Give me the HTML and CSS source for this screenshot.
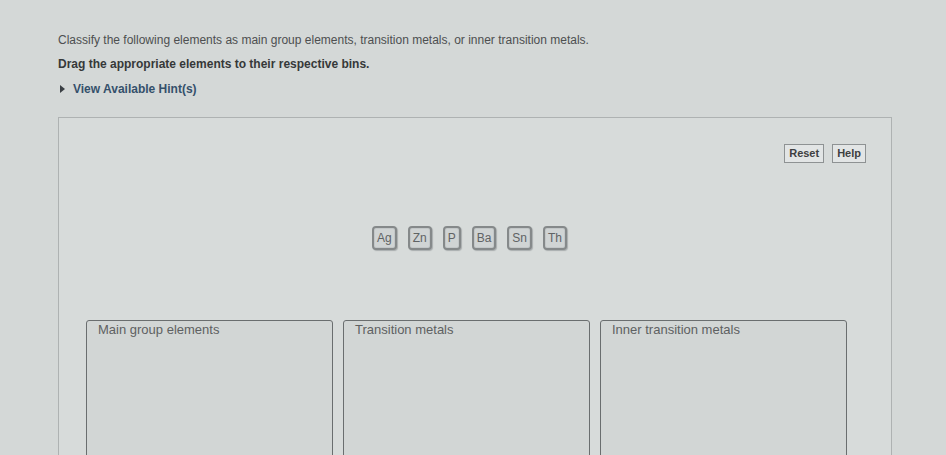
FILE: index.html
```html
<!DOCTYPE html>
<html>
<head>
<meta charset="utf-8">
<link rel="stylesheet" href="styles.css">
</head>
<body>
<div class="page">
  <p class="intro">Classify the following elements as main group elements, transition metals, or inner transition metals.</p>
  <p class="instr">Drag the appropriate elements to their respective bins.</p>
  <div class="hint"><span class="tri"></span><span class="hint-text">View Available Hint(s)</span></div>
  <div class="panel">
    <div class="toolbar">
      <span class="btn">Reset</span>
      <span class="btn">Help</span>
    </div>
    <div class="tiles">
      <span class="tile">Ag</span>
      <span class="tile">Zn</span>
      <span class="tile">P</span>
      <span class="tile">Ba</span>
      <span class="tile">Sn</span>
      <span class="tile">Th</span>
    </div>
    <div class="bins">
      <div class="bin">Main group elements</div>
      <div class="bin">Transition metals</div>
      <div class="bin">Inner transition metals</div>
    </div>
  </div>
</div>
</body>
</html>
```
FILE: styles.css
```css
html, body {
  margin: 0;
  padding: 0;
  background: #d4d8d7;
  font-family: "Liberation Sans", Arial, sans-serif;
  overflow: hidden;
}
.page {
  padding: 33px 0 0 58px;
  width: 834px;
}
.intro {
  margin: 0;
  font-size: 12px;
  line-height: 14px;
  color: #4d4f50;
}
.instr {
  margin: 10px 0 0;
  font-size: 12px;
  line-height: 14px;
  font-weight: bold;
  color: #363839;
}
.hint {
  margin: 11px 0 0 2px;
  display: flex;
  align-items: center;
  gap: 8px;
  font-size: 12px;
  line-height: 14px;
  font-weight: bold;
  color: #34506b;
}
.tri {
  width: 0;
  height: 0;
  border-top: 4px solid transparent;
  border-bottom: 4px solid transparent;
  border-left: 5px solid #3a3f44;
}
.panel {
  margin-top: 21px;
  border: 1px solid #aeb2b2;
  background: #d7dbda;
  height: 400px;
  box-sizing: border-box;
  padding: 0 38px 0 27px;
}
.toolbar {
  display: flex;
  justify-content: flex-end;
  gap: 8px;
  margin: 26px -13px 0 0;
}
.btn {
  border: 1px solid #8e9293;
  background: #e2e5e5;
  font-size: 11px;
  line-height: 17px;
  padding: 0 4px;
  color: #3e4041;
  font-weight: bold;
}
.tiles {
  display: flex;
  justify-content: center;
  gap: 11px;
  margin: 63px 0 0 0;
}
.tile {
  border: 2px solid #85898a;
  border-radius: 4px;
  background: #d0d4d4;
  font-size: 12px;
  line-height: 20px;
  padding: 0 3px;
  color: #606364;
  box-shadow: 1px 1px 1px #a9adae, inset 0 0 0 1px #c3c7c8;
}
.bins {
  display: flex;
  gap: 10px;
  margin-top: 70px;
}
.bin {
  width: 247px;
  height: 200px;
  border: 1px solid #6a6e6f;
  border-radius: 3px;
  box-sizing: border-box;
  padding: 1px 11px;
  font-size: 13px;
  line-height: 16px;
  color: #5e6162;
  background: #d2d6d5;
}
```
